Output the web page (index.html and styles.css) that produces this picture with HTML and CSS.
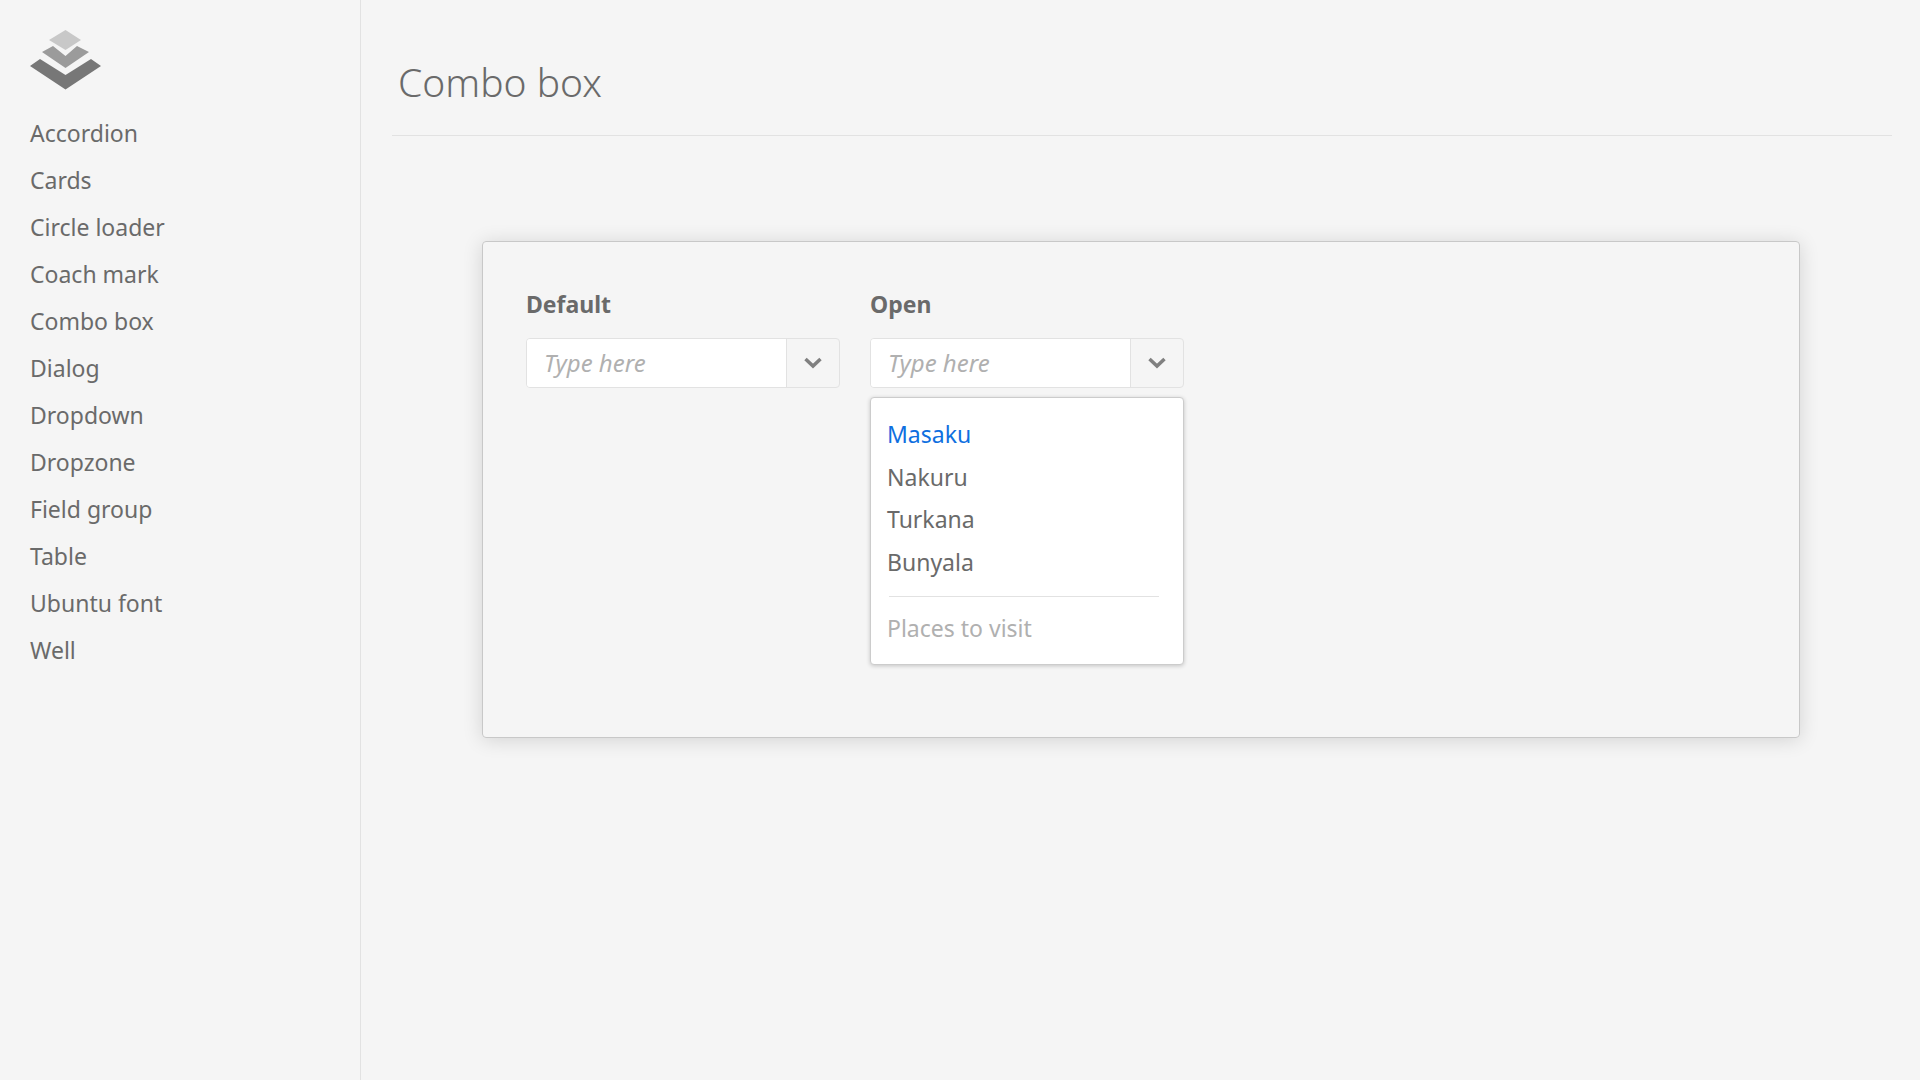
FILE: index.html
```html
<!DOCTYPE html>
<html lang="en">
<head>
    <meta charset="UTF-8">
    <meta name="viewport" content="width=device-width, initial-scale=1.0">
    <title>Combo box</title>
    <link rel="stylesheet" href="styles.css">
</head>
<body>
    <div class="layout">
        <aside class="sidebar">
            <svg class="logo" width="72" height="60" viewBox="0 0 72 60">
                <polygon points="35.500,0 51,10 35.500,20 19,10" fill="#c8c8c8"></polygon>
                <polygon points="12,22 23,16 35.500,26 47,16 59,22 35.500,38" fill="#9b9b9b"></polygon>
                <polygon points="0,36 10,29 35.500,45 61,29 71,36 35.500,59.500" fill="#777777"></polygon>
            </svg>
            <nav class="nav">
                <a class="nav-item">Accordion</a>
                <a class="nav-item">Cards</a>
                <a class="nav-item">Circle loader</a>
                <a class="nav-item">Coach mark</a>
                <a class="nav-item">Combo box</a>
                <a class="nav-item">Dialog</a>
                <a class="nav-item">Dropdown</a>
                <a class="nav-item">Dropzone</a>
                <a class="nav-item">Field group</a>
                <a class="nav-item">Table</a>
                <a class="nav-item">Ubuntu font</a>
                <a class="nav-item">Well</a>
            </nav>
        </aside>
        <main class="main">
            <h1 class="page-title">Combo box</h1>
            <section class="card">
                <div class="field">
                    <div class="field-label">Default</div>
                    <div class="combo">
                        <div class="combo-input">Type here</div>
                        <div class="combo-button">
                            <svg width="18" height="12" viewBox="0 0 18 12"><path d="M1.500 2 L9 9 L16.500 2" fill="none" stroke="#808080" stroke-width="3.500"></path></svg>
                        </div>
                    </div>
                </div>
                <div class="field">
                    <div class="field-label">Open</div>
                    <div class="combo">
                        <div class="combo-input">Type here</div>
                        <div class="combo-button">
                            <svg width="18" height="12" viewBox="0 0 18 12"><path d="M1.500 2 L9 9 L16.500 2" fill="none" stroke="#808080" stroke-width="3.500"></path></svg>
                        </div>
                    </div>
                    <ul class="combo-list">
                        <li class="combo-option active">Masaku</li>
                        <li class="combo-option">Nakuru</li>
                        <li class="combo-option">Turkana</li>
                        <li class="combo-option">Bunyala</li>
                        <li class="combo-divider"></li>
                        <li class="combo-option muted">Places to visit</li>
                    </ul>
                </div>
            </section>
        </main>
    </div>
</body>
</html>
```

FILE: styles.css
```css
body {
    margin: 0;
    background-color: #f5f5f5;
    color: #6a6a6a;
    font-family: 'Noto Sans', sans-serif;
}

.layout {
    display: flex;
    min-height: 1080px;
}

.sidebar {
    flex: none;
    width: 330px;
    border-right: 1px solid #e2e2e2;
    padding: 30px 0 0 30px;
}

.logo {
    display: block;
}

.nav {
    margin-top: 20px;
    display: flex;
    flex-direction: column;
}

.nav-item {
    height: 47px;
    line-height: 47px;
    font-size: 23px;
}

.main {
    flex: 1;
    padding: 0 28px 0 31px;
}

.page-title {
    margin: 0 0 105px;
    height: 136px;
    box-sizing: border-box;
    border-bottom: 1px solid #e2e2e2;
    padding: 52px 0 0 6px;
    font-size: 39px;
    line-height: 60px;
    font-weight: 300;
}

.card {
    display: flex;
    gap: 30px;
    width: 1318px;
    height: 497px;
    box-sizing: border-box;
    margin-left: 90px;
    padding: 47px 43px;
    border: 1px solid #c8c8c8;
    border-radius: 4px;
    box-shadow: 0 2px 20px rgba(0, 0, 0, 0.14);
}

.field {
    width: 314px;
}

.field-label {
    font-size: 23px;
    font-weight: 700;
    line-height: 30px;
    margin-bottom: 19px;
}

.combo {
    display: flex;
    height: 50px;
    box-sizing: border-box;
    border: 1px solid #e2e2e2;
    border-radius: 4px;
}

.combo-input {
    flex: 1;
    background-color: #fff;
    border-radius: 3px 0 0 3px;
    padding-left: 17px;
    font-size: 24px;
    font-style: italic;
    line-height: 47px;
    color: #b0b0b0;
}

.combo-button {
    width: 52px;
    border-left: 1px solid #e2e2e2;
    display: flex;
    align-items: center;
    justify-content: center;
}

.combo-list {
    list-style: none;
    margin: 9px 0 0;
    padding: 15px 0 0;
    height: 268px;
    box-sizing: border-box;
    background-color: #fff;
    border: 1px solid #ccc;
    border-radius: 4px;
    box-shadow: 0 1px 4px rgba(0, 0, 0, 0.2);
}

.combo-option {
    height: 42.670px;
    line-height: 42.670px;
    padding-left: 16px;
    font-size: 23px;
}

.combo-option.active {
    color: #0f6fe0;
}

.combo-option.muted {
    color: #b0b0b0;
}

.combo-divider {
    height: 1px;
    background-color: #e2e2e2;
    margin: 12px 24px 10px 18px;
}
```
